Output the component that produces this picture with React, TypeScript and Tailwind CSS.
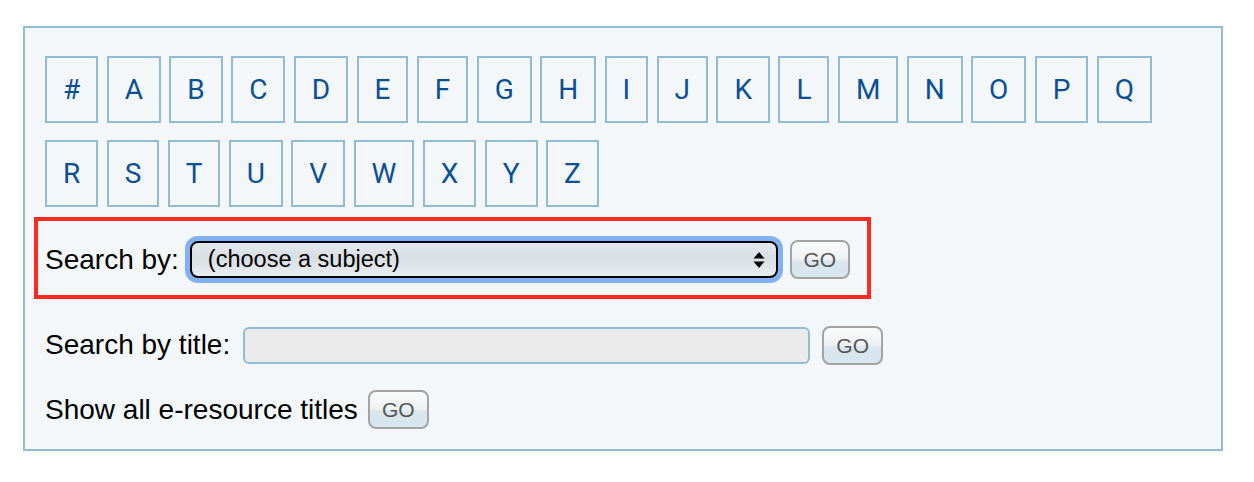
import React from "react";

const letters = ["#", ..."ABCDEFGHIJKLMNOPQRSTUVWXYZ".split("")];

function GoButton({ className = "" }: { className?: string }) {
  return (
    <button
      className={
        "flex items-center justify-center rounded-[8px] border-2 border-[#a3a3a3] bg-[linear-gradient(to_bottom,#fbfbfb_0%,#eef1f3_48%,#d9e6ee_56%,#d6e5ee_100%)] text-[21px] text-[#555555] font-['Liberation_Sans',Arial,sans-serif] leading-none " +
        className
      }
    >
      GO
    </button>
  );
}

export default function App() {
  return (
    <div className="w-[1254px] h-[482px] bg-white pt-[26px] pl-[23px] font-['Liberation_Sans',Arial,sans-serif]">
      <div className="w-[1200px] h-[425px] border-2 border-[#92bcd2] bg-[#f3f7fa] px-[20px] pt-[28px]">
        <div className="flex flex-wrap gap-x-[8.4px] gap-y-[17px]">
          {letters.map((l) => (
            <a
              key={l}
              className="h-[67px] flex items-center px-[16px] border-2 border-[#92bcd2] text-[28px] text-[#0b4f95] font-['Roboto',sans-serif] leading-none"
            >
              {l}
            </a>
          ))}
        </div>

        <div className="mt-[10px] -ml-[11px] w-[837px] h-[82px] border-4 border-[#fb2b1f] flex items-center pl-[7px] pt-[3px]">
          <span className="text-[28px] text-black leading-none">Search by:</span>
          <div className="ml-[11px] w-[588px] h-[37px] rounded-[8px] border-2 border-black ring-[5px] ring-[#80b1f2] bg-[linear-gradient(to_bottom,#e2e7ea_0%,#d8dfe3_45%,#dce2e6_60%,#e8edf0_100%)] flex items-center justify-between pl-[16px] pr-[10px]">
            <span className="text-[23.5px] text-black leading-none">(choose a subject)</span>
            <svg width="14" height="18" viewBox="0 0 14 18">
              <path d="M7 1 L12.5 7.6 L1.5 7.6 Z" fill="#000" />
              <path d="M7 17 L12.5 10.4 L1.5 10.4 Z" fill="#000" />
            </svg>
          </div>
          <GoButton className="ml-[12px] w-[60px] h-[39px]" />
        </div>

        <div className="mt-[26px] h-[40px] flex items-center">
          <span className="text-[28px] text-black leading-none">Search by title:</span>
          <div className="ml-[13px] w-[567px] h-[37px] rounded-[6px] border-2 border-[#92bcd2] bg-[#ebebeb]" />
          <GoButton className="ml-[12px] w-[61px] h-[39px]" />
        </div>

        <div className="mt-[25px] h-[39px] flex items-center">
          <span className="text-[28px] text-black leading-none">Show all e-resource titles</span>
          <GoButton className="ml-[10px] w-[61px] h-[39px]" />
        </div>
      </div>
    </div>
  );
}
